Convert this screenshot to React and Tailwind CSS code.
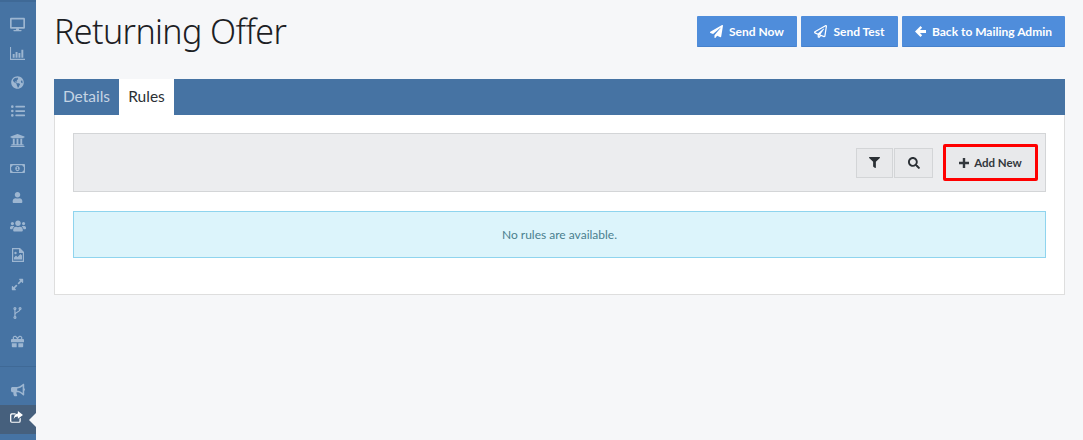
import React from 'react';
import {
  FaDesktop, FaGlobeAmericas, FaListUl, FaUniversity, FaRegMoneyBillAlt, FaUser, FaUsers,
  FaExpandAlt, FaGift, FaBullhorn,
  FaPaperPlane, FaRegPaperPlane, FaFilter, FaSearch,
} from 'react-icons/fa';

// these icons are the older, heavier shapes, the package only has the newer ones
const ChartIcon = ({ className }) => (
  <svg viewBox="0 0 14 12" className={className} fill="currentColor">
    <path d="M0 0h1v11h13v1H0z" />
    <path d="M2.5 6.5h1.8V10H2.5zM5.2 4.5H7V10H5.2zM7.9 5.5h1.8V10H7.9zM10.6 2.5h1.8V10h-1.8z" />
  </svg>
);

const FileImageIcon = ({ className }) => (
  <svg viewBox="0 0 12 14" className={className} fill="currentColor">
    <path fillRule="evenodd" d="M0 0h8l4 4v10H0zM1.2 1.2v11.6h9.6V5H7V1.2z" />
    <path d="M2 11.5V9.5l2-2 1.5 1.5L8.5 6 10 7.5v4z" />
    <circle cx="3.5" cy="5" r="1.2" />
  </svg>
);

const ForkIcon = ({ className }) => (
  <svg viewBox="0 0 10 14" className={className} fill="none" stroke="currentColor" strokeWidth="1.4">
    <path d="M2 2.5v9M8 2.5C8 6 2 5.5 2 9" />
    <circle cx="2" cy="1.8" r="1.1" />
    <circle cx="8" cy="1.8" r="1.1" />
    <circle cx="2" cy="12.2" r="1.1" />
  </svg>
);

const ShareIcon = ({ className }) => (
  <svg viewBox="0 0 14 13" className={className} fill="currentColor">
    <path d="M1.8 2.5H6v1.400H2.400a1 1 0 0 0-1 1v5.800a1 1 0 0 0 1 1h6.800a1 1 0 0 0 1-1V8.500l1.400-1.100v3.300a2 2 0 0 1-2 2H1.800A1.800 1.800 0 0 1 0 10.900V4.300a1.800 1.800 0 0 1 1.800-1.800z" />
    <path d="M8.500 0L14 4.200 8.500 8.400V6C6.200 6 4.800 6.700 4 9c0-4 1.800-6 4.500-6.300z" />
  </svg>
);

const PlusIcon = ({ className }) => (
  <svg viewBox="0 0 10 10" className={className} fill="currentColor">
    <path d="M3.800 0h2.400v3.800H10v2.400H6.200V10H3.800V6.200H0V3.800h3.800z" />
  </svg>
);

const ArrowLeftIcon = ({ className }) => (
  <svg viewBox="0 0 12 12" className={className} fill="currentColor">
    <path d="M0 6l6-6 1.800 1.800L5.400 4.300H12v3.400H5.400l2.400 2.500L6 12z" />
  </svg>
);

const topItems = [
  { icon: FaDesktop, size: 'text-[15px]' },
  { icon: ChartIcon, size: 'w-[15px] h-[13px]' },
  { icon: FaGlobeAmericas, size: 'text-[13px]' },
  { icon: FaListUl, size: 'text-[14px]' },
  { icon: FaUniversity, size: 'text-[15px]' },
  { icon: FaRegMoneyBillAlt, size: 'text-[15px]' },
  { icon: FaUser, size: 'text-[11px]' },
  { icon: FaUsers, size: 'text-[16px]' },
  { icon: FileImageIcon, size: 'w-[12px] h-[14px]' },
  { icon: FaExpandAlt, size: 'text-[13px]' },
  { icon: ForkIcon, size: 'w-[9px] h-[12px]' },
  { icon: FaGift, size: 'text-[13px]' },
];

const Sidebar = () => (
  <aside className="w-9 shrink-0 min-h-[440px] bg-[#4673a3] text-[#9db6d1] border-t-2 border-[#3f6996] flex flex-col">
    <div className="pt-[8.500px] pb-[9.500px] border-b border-[#3f6996]">
      {topItems.map(({ icon: Icon, size }, i) => (
        <div key={i} className="h-[28.8px] pr-px flex items-center justify-center">
          <Icon className={size} />
        </div>
      ))}
    </div>
    <div className="h-[38px] pt-[8px] pr-px flex items-center justify-center">
      <FaBullhorn className="text-[14px]" />
    </div>
    <div className="relative h-[29px] bg-[#46607d] text-white flex items-center justify-center">
      <ShareIcon className="w-[13px] h-[12px] -mt-[5px] -ml-[3px]" />
      <span className="absolute right-0 top-[8px] w-0 h-0 border-y-[7px] border-y-transparent border-r-[7px] border-r-[#f6f7f9]" />
    </div>
  </aside>
);

const HeaderButton = ({ icon: Icon, label, width, iconSize }) => (
  <button className={`${width} h-[31px] pt-px flex items-center justify-center gap-[6px] bg-[#4f8ddb] border-b border-[#4681cc] rounded-[1px] text-white text-[12px] font-bold`}>
    <Icon className={iconSize} />
    {label}
  </button>
);

export default function App() {
  return (
    <div className="flex min-h-[440px] bg-[#f6f7f9] overflow-hidden font-['Lato','Liberation_Sans',sans-serif]">
      <Sidebar />
      <main className="flex-1 px-[18px]">
        <div className="h-[79px] flex items-start justify-between">
          <h1 className="mt-[7px] text-[#1c2024] text-[34px] leading-[48px] font-light tracking-[-0.6px] font-['Noto_Sans','Liberation_Sans',sans-serif]">Returning Offer</h1>
          <div className="mt-[16px] flex gap-1">
            <HeaderButton icon={FaPaperPlane} label="Send Now" width="w-[100px]" iconSize="text-[13px]" />
            <HeaderButton icon={FaRegPaperPlane} label="Send Test" width="w-[97px]" iconSize="text-[13px]" />
            <HeaderButton icon={ArrowLeftIcon} label="Back to Mailing Admin" width="w-[163px]" iconSize="w-[11px] h-[11px]" />
          </div>
        </div>

        <div className="h-9 flex bg-[#4673a3] text-[15.500px]">
          <div className="w-[65px] flex items-center justify-center text-[#c5d4e4]">Details</div>
          <div className="w-[55px] flex items-center justify-center bg-white text-[#2b3035]">Rules</div>
        </div>

        <section className="h-[180px] bg-white border-x border-b border-[#dedede] px-[18px] pt-[18px]">
          <div className="h-[59px] bg-[#ecedef] border border-[#d3d5d7] flex items-center justify-end pr-[7px]">
            <div className="flex gap-px mr-[10px] text-[#2b3035]">
              <button className="w-[37px] h-[30px] flex items-center justify-center bg-[#e8e9eb] border border-[#d3d5d7] text-[11px]">
                <FaFilter />
              </button>
              <button className="w-[39px] h-[30px] flex items-center justify-center bg-[#e8e9eb] border border-[#d3d5d7] text-[12px]">
                <FaSearch />
              </button>
            </div>
            <button className="w-[95px] h-[37px] pt-px flex items-center justify-center gap-[5px] bg-[#e8e9eb] border-[3px] border-[#ff0000] rounded-[2px] text-[#33383d] text-[11.500px] font-bold">
              <PlusIcon className="w-[10px] h-[10px]" />
              Add New
            </button>
          </div>
          <div className="mt-[19px] h-[47px] flex items-center justify-center bg-[#dcf4fb] border border-[#8fd4ee] text-[#4a7f8f] text-[12px]">
            No rules are available.
          </div>
        </section>
      </main>
    </div>
  );
}
